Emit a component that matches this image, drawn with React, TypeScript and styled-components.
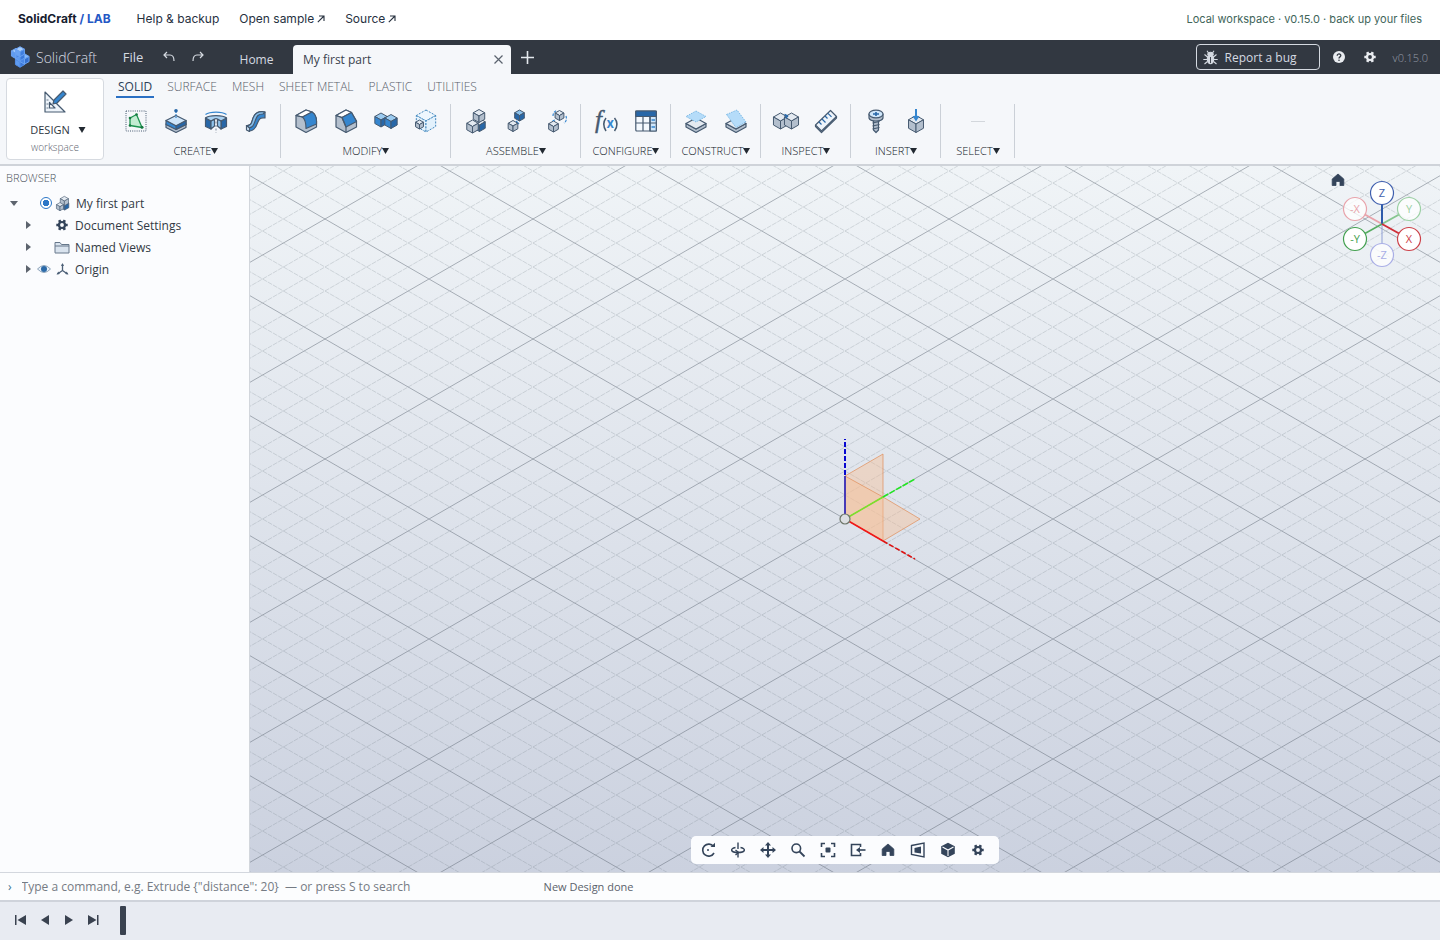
import React from "react";
import styled, { createGlobalStyle } from "styled-components";

const ui = `"Open Sans", "Noto Sans", sans-serif`;
const line = "#465a70";
const blue = "#3586cf";
const deep = "#2767a8";
const pale = "#cfe6fa";
const grey = "#b3bfcd";
const light = "#e4eaf1";

const Global = createGlobalStyle`
  * { box-sizing: border-box; }
  body { margin: 0; font-family: ${ui}; color: #333b47; background: #fafcfe; }
  button, input { font: inherit; color: inherit; }
  button { background: none; border: 0; padding: 0; cursor: pointer; }
  svg { display: block; flex: none; }
`;

const Page = styled.div`
  min-height: 100vh;
  display: flex;
  flex-direction: column;
`;

const SiteBar = styled.header`
  height: 40px;
  flex: none;
  padding: 0 18px 2px;
  display: flex;
  align-items: center;
  gap: 20px;
  background: #fff;
  font-family: Inter, sans-serif;
  font-size: 12px;
  line-height: 36px;
`;
const SiteBrand = styled.strong`
  font-weight: 700;
  color: #16202e;
  margin-right: 6px;
  span { color: #2458c5; }
`;
const SiteLink = styled.a`
  color: #27313f;
  text-decoration: none;
  display: flex;
  align-items: center;
  gap: 3px;
`;
const SiteNote = styled.span`
  margin-left: auto;
  font-size: 11px;
  line-height: 40px;
  color: #41655a;
`;

const AppBar = styled.div`
  height: 34px;
  flex: none;
  display: flex;
  align-items: center;
  padding: 0 12px 0 10px;
  background: #323841;
  color: #d5dae1;
  font-size: 13px;
`;
const Brand = styled.div`
  display: flex;
  align-items: center;
  gap: 6px;
  width: 102px;
  font-size: 14px;
  font-weight: 300;
`;
const BarButton = styled.button<{ $w: number }>`
  width: ${(p) => p.$w}px;
  height: 30px;
  display: flex;
  align-items: center;
  justify-content: center;
`;
const DocTab = styled.div`
  align-self: flex-end;
  width: 218px;
  height: 29px;
  padding: 0 7px 0 10px;
  display: flex;
  align-items: center;
  justify-content: space-between;
  border-radius: 4px 4px 0 0;
  background: #f5f7fa;
  color: #39414d;
  font-size: 12px;
`;
const HomeTab = styled(BarButton)`
  align-self: flex-end;
  margin-left: 9px;
  margin-right: 2px;
  font-size: 12px;
`;
const BarEnd = styled.div`
  margin-left: auto;
  display: flex;
  align-items: center;
`;
const BugButton = styled.button`
  width: 124px;
  height: 26px;
  padding: 0 6px;
  margin-right: 4px;
  display: flex;
  align-items: center;
  gap: 7px;
  border: 1px solid #d5dae1;
  border-radius: 4px;
  font-size: 12px;
`;
const Version = styled.span`
  margin-left: 7px;
  font-size: 11px;
  font-weight: 300;
  color: #959ca7;
`;

const Ribbon = styled.div`
  flex: none;
  display: flex;
  padding: 4px 6px;
  height: 92px;
  background: #f5f7fa;
  border-bottom: 2px solid #cfd3d9;
`;
const Workspace = styled.button`
  width: 98px;
  height: 82px;
  padding-top: 11px;
  display: flex;
  flex-direction: column;
  align-items: center;
  background: #fff;
  border: 1px solid #d6dae0;
  border-radius: 4px;
  font-size: 11px;
  line-height: 16px;
  color: #2e3641;
  small { font-size: 10px; line-height: 18px; font-weight: 300; color: #5e656f; }
`;
const WorkspaceName = styled.span`
  display: flex;
  align-items: center;
  gap: 8px;
  margin-top: 8px;
  padding-left: 6px;
`;
const RibbonMain = styled.div`
  flex: 1;
  padding-left: 7px;
`;
const Tabs = styled.div`
  display: flex;
  gap: 11px;
  padding-left: 5px;
  height: 20px;
`;
const Tab = styled.button<{ $on?: boolean }>`
  height: 20px;
  padding: 0 2px;
  font-size: 12px;
  line-height: 18px;
  font-weight: ${(p) => (p.$on ? 400 : 300)};
  color: ${(p) => (p.$on ? "#2c4058" : "#59606b")};
  border-bottom: 2px solid ${(p) => (p.$on ? "#2a70c4" : "transparent")};
`;
const Groups = styled.div`
  display: flex;
  margin-top: 6px;
`;
const Group = styled.div`
  height: 54px;
  min-width: 74px;
  padding: 0 4px 0 5px;
  display: flex;
  flex-direction: column;
  align-items: center;
  justify-content: space-between;
  border-right: 1px solid #cbd0d7;
`;
const Tools = styled.div`
  display: flex;
  height: 34px;
  align-items: center;
`;
const Tool = styled.button`
  width: 40px;
  height: 34px;
  display: flex;
  align-items: center;
  justify-content: center;
`;
const GroupLabel = styled.button`
  display: flex;
  align-items: center;
  font-size: 11px;
  line-height: 15px;
  font-weight: 300;
  color: #10161e;
`;

const Body = styled.div`
  flex: 1;
  display: flex;
  min-height: 400px;
`;
const Side = styled.aside`
  width: 250px;
  flex: none;
  background: #fbfcfe;
  border-right: 1px solid #d2d6dc;
`;
const SideTitle = styled.h2`
  margin: 0;
  padding: 4px 6px 6px;
  font-size: 11px;
  line-height: 16px;
  font-weight: 300;
  color: #4b525c;
`;
const TreeRow = styled.div<{ $depth: number }>`
  height: 22px;
  padding-left: ${(p) => 7 + p.$depth * 14}px;
  display: flex;
  align-items: center;
  font-size: 12px;
  color: #323a45;
`;
const Twisty = styled.button`
  width: 14px;
  height: 20px;
  display: flex;
  align-items: center;
  justify-content: center;
`;
const Slot = styled.span<{ $w: number }>`
  width: ${(p) => p.$w}px;
  display: flex;
  justify-content: center;
`;
const RowName = styled.span`
  margin-left: 4px;
`;
const Radio = styled.input`
  appearance: none;
  width: 12px;
  height: 12px;
  margin: 0;
  border: 1px solid #2b76c7;
  border-radius: 50%;
  background: radial-gradient(circle, #2b76c7 0 3px, #fff 3px);
`;

const Stage = styled.main`
  flex: 1;
  position: relative;
  overflow: hidden;
  background: linear-gradient(#f0f4f7, #cbd1df);
`;
const Scene = styled.svg`
  position: absolute;
  inset: 0;
  width: 100%;
  height: 100%;
`;
const ViewHome = styled.button`
  position: absolute;
  top: 7px;
  right: 95px;
`;
const Gizmo = styled.svg`
  position: absolute;
  top: 14px;
  right: 18px;
`;
const NavBar = styled.div`
  position: absolute;
  bottom: 8px;
  left: 50%;
  transform: translateX(-50%);
  display: flex;
  padding: 0 6px 0 2px;
  background: #fbfcfe;
  border-radius: 5px;
  button { width: 30px; height: 28px; display: flex; align-items: center; justify-content: center; }
`;

const CommandBar = styled.div`
  height: 30px;
  flex: none;
  display: flex;
  align-items: center;
  padding-left: 8px;
  background: #fcfdfe;
  border-top: 1px solid #d3d7de;
  border-bottom: 2px solid #cfd3db;
  font-size: 12px;
  color: #3d7590;
`;
const CommandInput = styled.input`
  width: 522px;
  margin-left: 10px;
  padding: 0;
  border: 0;
  outline: 0;
  background: none;
  &::placeholder { color: #757b84; opacity: 1; }
`;
const Status = styled.span`
  font-size: 11px;
  color: #5b626c;
`;
const Timeline = styled.div`
  height: 38px;
  flex: none;
  display: flex;
  align-items: center;
  padding: 0 8px 2px;
  background: #e8ebf2;
  button { width: 24px; height: 24px; display: flex; align-items: center; justify-content: center; }
`;
const Marker = styled.span`
  width: 6px;
  height: 29px;
  margin-left: 16px;
  border-radius: 1px;
  background: #3a4250;
`;

const Caret = ({ w = 7 }: { w?: number }) => (
  <svg width={w} height="6" viewBox="0 0 7 6"><path d="M0 0h7L3.500 6z" fill="#222931" /></svg>
);

type CubeProps = { x: number; y: number; r: number; top?: string; left?: string; right?: string; stroke?: string; dash?: string };
const Cube = ({ x, y, r, top = light, left = grey, right = grey, stroke = line, dash }: CubeProps) => {
  const w = r * 0.88;
  const h = r / 2;
  return (
    <g stroke={stroke} strokeWidth="1" strokeLinejoin="round" strokeDasharray={dash}>
      <path d={`M${x} ${y - r}l${w} ${h}l${-w} ${h}l${-w} ${-h}z`} fill={top} />
      <path d={`M${x - w} ${y - h}l${w} ${h}v${r}l${-w} ${-h}z`} fill={left} />
      <path d={`M${x + w} ${y - h}l${-w} ${h}v${r}l${w} ${-h}z`} fill={right} />
    </g>
  );
};

const Icon = ({ children, size = 24 }: { children: React.ReactNode; size?: number }) => (
  <svg width={size} height={size} viewBox="0 0 24 24" fill="none" overflow="visible" stroke={line} strokeWidth="1.200" strokeLinejoin="round">
    {children}
  </svg>
);

const Sketch = () => (
  <Icon>
    <rect x="2" y="2" width="20" height="20" strokeWidth="1" strokeDasharray="1 1.200" />
    <path d="M6 9l6.500-3.500L18 18.500 6 16.500z" fill="#c3ecd2" stroke="#1d9350" strokeWidth="1.300" />
    <g fill="#157a40" stroke="none"><circle cx="6" cy="9" r="1.300" /><circle cx="12.500" cy="5.500" r="1.300" /><circle cx="18" cy="18.300" r="1.500" /><circle cx="6" cy="16.500" r="1.300" /></g>
  </Icon>
);
const Extrude = () => (
  <Icon>
    <path d="M2 15v3.500l10 5 10-5V15l-10 5z" fill={grey} />
    <path d="M2 11.500V15.500l10 5 10-5v-4l-10 5z" fill={blue} />
    <path d="M22 11.500v4l-10 5v-4z" fill={deep} />
    <path d="M12 6.500l10 5-10 5.200-10-5.200z" fill={pale} />
    <path d="M12 9V3" stroke={blue} strokeDasharray="1.500 1" /><circle cx="12" cy="1.800" r="1.800" fill={deep} stroke="none" />
  </Icon>
);
const Revolve = () => (
  <Icon>
    <path d="M1.500 5.500C6 2.200 18 2.200 22.500 5.500" stroke={blue} />
    <path d="M1.500 9v8.500l5.500 2.500v-8zM22.500 9v8.500l-5.500 2.500v-8z" fill={deep} />
    <path d="M7 12l3.500-2v7L7 20zM17 12l-3.500-2v7l3.500 3z" fill="#8fc3ec" />
    <path d="M1.500 9C5 5.800 19 5.800 22.500 9L17 12l-3.500-2c-1-.4-2-.4-3 0L7 12z" fill="#a9d2f3" />
    <path d="M12 12.500v11" stroke="#8e9aa8" strokeDasharray="2 1.500" />
  </Icon>
);
const Sweep = () => (
  <Icon>
    <path d="M2.500 16.500c6 .5 5-4.500 7-8.500 2-4.500 6-6 11.500-5v6c-5-.8-6 1-7.500 5-1.500 4.500-4 8-8.500 8z" fill={blue} />
    <path d="M2.500 16.500c6 .5 5-4.500 7-8.500 2-4.500 6-6 11.500-5l-2 2c-5 0-6 2-7.500 6-1.500 4-2.500 8-6.500 7.500z" fill="#86bfec" />
    <path d="M2.500 16.500l3 2.500v3.500l-3-1.500z" fill={pale} />
  </Icon>
);
const Fillet = () => (
  <Icon>
    <path d="M2 6.500L12 1l6 2c3 2 4.500 5 4.500 9v6L12 23.500 2 18z" fill={grey} />
    <path d="M2 6.500L12 1l6 2-9.500 5z" fill="#fff" />
    <path d="M8.500 8L18 3c3 2 4.500 5 4.500 9v3L12 19.500c0-6-.5-9-3.500-11.500z" fill={blue} />
    <path d="M2 6.500l6.500 1.500" />
  </Icon>
);
const Chamfer = () => (
  <Icon>
    <path d="M2 6.500L12 1l5.500 2.500 5 8.500v6L12 23.500 2 18z" fill={grey} />
    <path d="M2 6.500L12 1l5.500 2.500-9.500 5z" fill="#fff" />
    <path d="M8 8.500l9.500-5 5 9L12 18z" fill={blue} />
    <path d="M2 6.500l6 2 4 9.500v5.500" />
  </Icon>
);
const Combine = () => (
  <Icon>
    <Cube x={7} y={11} r={7} top="#9bcbf0" left={blue} right={deep} />
    <Cube x={17} y={12.500} r={7} top="#9bcbf0" left={blue} right={deep} />
  </Icon>
);
const Shell = () => (
  <Icon>
    <Cube x={12} y={12} r={11} top="#eef7fe" left="#e2f1fc" right="#e2f1fc" stroke="#3f86bd" dash="2 1.300" />
    <Cube x={5.500} y={15.500} r={4.500} />
  </Icon>
);
const NewComponent = () => (
  <Icon>
    <Cube x={15.500} y={16} r={6.500} left={deep} right={deep} />
    <Cube x={15} y={7} r={6.500} />
    <Cube x={8.500} y={17.500} r={6.500} />
  </Icon>
);
const Joint = () => (
  <Icon>
    <Cube x={15.500} y={6.500} r={5.500} top="#8cc3ee" left={deep} right={deep} />
    <path d="M12 12l3 3" stroke={blue} />
    <Cube x={9} y={17} r={5.500} />
  </Icon>
);
const AsBuilt = () => (
  <Icon>
    <Cube x={15.500} y={6.500} r={5} /><Cube x={9.500} y={17.500} r={5.500} />
    <path d="M9 7c0-3 2-5 4-6M22 7c1 3 0 6-2 7M11 11l-3 1" stroke={blue} strokeDasharray="2.500 1.200" />
  </Icon>
);
const Params = () => (
  <Icon>
    <g stroke="none" fontFamily="Liberation Serif, serif" fontStyle="italic">
      <text x="1" y="19" fontSize="25" fill={line} stroke={line} strokeWidth="0.400">f</text>
      <text x="12.500" y="18.500" fontSize="13" fontWeight="700" fontFamily="Inter, sans-serif" fontStyle="normal" fill={blue}>x</text>
    </g>
    <path d="M12 9q-4.500 6 0 13M20.500 9q5 6 0 13" strokeWidth="1.500" />
  </Icon>
);
const Table = () => (
  <Icon>
    <rect x="1.800" y="2" width="20.500" height="20" rx="1" fill="#f4f9fe" />
    <path d="M1.800 2h20.500v5.500H1.800z" fill={deep} />
    <path d="M16 7.500h6.300V22H16z" fill={pale} />
    <path d="M1.800 14h20.500M9 7.500V22M16 7.500V22" />
    <path d="M17.500 11h3.500M17.500 18h3.500" stroke={blue} strokeWidth="1.500" />
  </Icon>
);
const Slab = () => (
  <><path d="M2 14.500v3.500l10 5.500 10-5.500v-3.500l-10 5.500z" fill={grey} /><path d="M12 9l10 5.500L12 20 2 14.500z" fill={light} /></>
);
const OffsetPlane = () => (
  <Icon><Slab /><path d="M12 2l10 5.500L12 13 2 7.500z" fill="#b5dcf9" stroke="#6aaee0" strokeWidth="0.800" strokeDasharray="1.500 1" /></Icon>
);
const AnglePlane = () => (
  <Icon><Slab /><path d="M2.500 5.500L13 1l9 12-10 5.500z" fill="#b5dcf9" stroke="#6aaee0" strokeWidth="0.800" strokeDasharray="1.500 1" /></Icon>
);
const Interference = () => (
  <Icon>
    <Cube x={6.500} y={12} r={8} /><Cube x={17.500} y={12} r={8} />
    <path d="M10.500 5.500l3 1.500-2 2" stroke={deep} strokeWidth="1.800" />
  </Icon>
);
const Measure = () => (
  <Icon>
    <path d="M1.500 16L16.500 1.500l6 6L7.500 22z" fill="#eef4fa" />
    <path d="M1.500 16v1.500l6 6 15-14.500V7.500" />
    <path d="M5 13l2.500 2.500M8 10l3.500 3.500M11 7l2.500 2.500M14 4.300l3.500 3.500" stroke={deep} />
  </Icon>
);
const Screw = () => (
  <Icon>
    <path d="M9.500 10v11l2.500 2.500 2.500-2.500V10z" fill={grey} />
    <path d="M8.500 14l7-1.500M8.500 17l7-1.500M8.500 20l7-1.500" />
    <path d="M5 5v4c1 4 13 4 14 0V5z" fill={grey} />
    <ellipse cx="12" cy="5" rx="7" ry="3.800" fill={pale} />
    <path d="M12 3v4M9 5h6" stroke={deep} strokeWidth="1.600" />
  </Icon>
);
const InsertMesh = () => (
  <Icon>
    <Cube x={12} y={15} r={8.500} />
    <path d="M12 0v9" stroke={blue} strokeWidth="2" /><path d="M8.500 7h7L12 12.500z" fill={blue} stroke="none" />
  </Icon>
);
const NoTool = () => <Icon><path d="M5 12.500h14" stroke="#d3d7dc" strokeWidth="1" /></Icon>;

const groups: [string, [string, () => React.ReactElement][]][] = [
  ["CREATE", [["Sketch", Sketch], ["Extrude", Extrude], ["Revolve", Revolve], ["Sweep", Sweep]]],
  ["MODIFY", [["Fillet", Fillet], ["Chamfer", Chamfer], ["Combine", Combine], ["Shell", Shell]]],
  ["ASSEMBLE", [["New component", NewComponent], ["Joint", Joint], ["As-built joint", AsBuilt]]],
  ["CONFIGURE", [["Parameters", Params], ["Table", Table]]],
  ["CONSTRUCT", [["Offset plane", OffsetPlane], ["Plane at angle", AnglePlane]]],
  ["INSPECT", [["Interference", Interference], ["Measure", Measure]]],
  ["INSERT", [["Fastener", Screw], ["Insert mesh", InsertMesh]]],
  ["SELECT", [["Select", NoTool]]],
];

const Gear = ({ size = 12, color = "#34445a" }: { size?: number; color?: string }) => (
  <svg width={size} height={size} viewBox="0 0 12 12" fill="none" stroke={color}>
    <circle cx="6" cy="6" r="3" strokeWidth="2.200" />
    <path d="M.3 6h2.500M9.200 6h2.500M3.150 1.060l1.250 2.170M7.600 8.770l1.250 2.170M8.850 1.060L7.600 3.230M4.400 8.770l-1.250 2.170" strokeWidth="2.600" />
  </svg>
);
const House = () => (
  <svg width="14" height="14" viewBox="0 0 14 14"><path d="M7 1L12.800 6v6.500H9V8.500H5v4H1.200V6z" fill="#34445a" stroke="#34445a" strokeWidth=".8" strokeLinejoin="round" /></svg>
);
const Arrow = () => (
  <svg width="8" height="8" viewBox="0 0 8 8" fill="none" stroke="#27313f" strokeWidth="1.100"><path d="M.8 7.200L7 1M2 1h5v5" /></svg>
);
const Bug = () => (
  <svg width="15" height="15" viewBox="0 0 15 15" stroke="#d5dae1" fill="#d5dae1" strokeWidth="1.100">
    <ellipse cx="7.500" cy="9" rx="3.200" ry="4.700" /><path d="M4.800 4.500a2.700 2.200 0 0 1 5.400 0z" />
    <path d="M5.500 3L4 .8M9.500 3L11 .8M4.500 7L1.500 4.500M10.500 7l3-2.500M4.500 9.500H.3M10.500 9.500h4.200M4.500 11.500L1.500 14M10.500 11.500l3 2.500" fill="none" />
    <path d="M7.500 7v6" stroke="#323841" strokeWidth=".9" />
  </svg>
);
const Logo = () => (
  <svg width="20" height="22" viewBox="0 0 20 22">
    <Cube x={10} y={16} r={5.200} top="#8bbcf8" left="#5f9cf2" right="#3b79da" stroke="#5590ea" />
    <Cube x={14.500} y={13} r={5.200} top="#8bbcf8" left="#4a88e8" right="#3470d0" stroke="#6ba2f2" />
    <Cube x={10} y={9.500} r={5.200} top="#8bbcf8" left="#5f9cf2" right="#3b79da" stroke="#5f9bf0" />
    <Cube x={6} y={7.500} r={5.200} top="#9cc7fb" left="#5f9cf2" right="#4a88e8" stroke="#6ba2f2" />
    <Cube x={10} y={5.700} r={5} top="#a9cffc" left="#6aa4f4" right="#3f7fe0" stroke="#6ba2f2" />
  </svg>
);

const n = "#34445a";
const navIcons: [string, React.ReactNode][] = [
  ["Orbit", <g><path d="M13.500 4.500A6 6 0 1 0 14 11" /><path d="M10.500 5h4.500V.8z" fill={n} stroke="none" /><circle cx="8" cy="8" r="1" fill={n} stroke="none" /></g>],
  ["Turntable", <g strokeWidth="1.400"><path d="M8 .5V7M8 9.500v6M5.500 5.500C-.5 6.500.5 10.500 8 10.500S16.500 6.500 10.500 5.500" /><path d="M5.500 8l3 2.500-3 2.500" /></g>],
  ["Pan", <g strokeWidth="2"><path d="M8 3v10M3 8h10" /><path d="M8 0l3 3.500H5zM8 16l3-3.500H5zM0 8l3.500-3v6zM16 8l-3.500-3v6z" fill={n} stroke="none" /></g>],
  ["Zoom", <g><circle cx="6.300" cy="6.300" r="4.300" /><path d="M9.500 9.500l5 5" strokeWidth="1.800" /></g>],
  ["Fit", <g><path d="M1.500 5V1.500H5M11 1.500h3.500V5M14.500 11v3.500H11M5 14.500H1.500V11" /><rect x="5.500" y="5.500" width="5" height="5" rx="1" fill={n} stroke="none" /></g>],
  ["Look at", <g><path d="M10.500 5V2.500H1.500v11h9V11" /><path d="M15.500 8H8" /><path d="M6 8l4-3v6z" fill={n} stroke="none" /></g>],
  ["Home view", null],
  ["Perspective", <g strokeWidth="1.400"><path d="M1.500 3.500l12.500-2.500v14L1.500 12.500z" /><path d="M4.500 6l6.500-1.500v7L4.500 10.500z" fill={n} stroke="none" /></g>],
  ["Visual style", <g><path d="M8 .8l6.800 3.500v7.500L8 15.300 1.200 11.800V4.300z" fill={n} stroke="none" /><path d="M2.500 5L8 8l5.500-3M8 8v6" stroke="#fbfcfe" strokeWidth="1.100" /></g>],
  ["Display settings", undefined],
];

const axes: [string, number, number, string, boolean][] = [
  ["-X", 13, 29, "#e8a3ab", true], ["Y", 67, 29, "#9bd0a3", true], ["-Z", 40, 75, "#a9aee6", true],
  ["Z", 40, 13, "#3f5fae", false], ["-Y", 13, 59, "#43a050", false], ["X", 67, 59, "#cc4048", false],
];

const minorLines = [-4, -3, -2, -1, 1, 2, 3, 4, 6, 7, 8, 9]
  .map((k) => (k < 5 ? `M0 ${k * 24}l208 120` : "") + (k > 0 ? `M0 ${k * 24}l208 -120` : ""))
  .join("");

const App = () => (
  <Page>
    <Global />
    <SiteBar>
      <SiteBrand>SolidCraft <span>/ LAB</span></SiteBrand>
      <SiteLink href="#help">Help &amp; backup</SiteLink>
      <SiteLink href="#sample">Open sample <Arrow /></SiteLink>
      <SiteLink href="#source">Source <Arrow /></SiteLink>
      <SiteNote>Local workspace · v0.15.0 · back up your files</SiteNote>
    </SiteBar>

    <AppBar>
      <Brand><Logo />SolidCraft</Brand>
      <BarButton $w={42}>File</BarButton>
      <BarButton $w={29} aria-label="Undo">
        <svg width="12" height="12" viewBox="0 0 12 12" fill="none" stroke="#d5dae1" strokeWidth="1.200"><path d="M4 1L1 4l3 3M1 4h6q4 0 4 6" /></svg>
      </BarButton>
      <BarButton $w={30} aria-label="Redo">
        <svg width="12" height="12" viewBox="0 0 12 12" fill="none" stroke="#d5dae1" strokeWidth="1.200"><path d="M8 1l3 3-3 3M11 4H5Q1 4 1 10" /></svg>
      </BarButton>
      <HomeTab $w={69}>Home</HomeTab>
      <DocTab>
        My first part
        <button aria-label="Close tab"><svg width="11" height="11" viewBox="0 0 11 11" stroke="#5b636e" strokeWidth="1.200"><path d="M1.500 1.500l8 8M9.500 1.500l-8 8" /></svg></button>
      </DocTab>
      <BarButton $w={32} aria-label="New tab">
        <svg width="13" height="13" viewBox="0 0 13 13" stroke="#e4e8ed" strokeWidth="1.600"><path d="M6.500 0v13M0 6.500h13" /></svg>
      </BarButton>
      <BarEnd>
        <BugButton><Bug />Report a bug</BugButton>
        <BarButton $w={31} aria-label="Help">
          <svg width="12" height="12" viewBox="0 0 12 12"><circle cx="6" cy="6" r="6" fill="#e9ecf0" /><path d="M4.200 4.800c0-2.600 3.800-2.400 3.600 0C7.700 6 6 5.800 6 7.400" fill="none" stroke="#323841" strokeWidth="1.300" /><circle cx="6" cy="9.300" r=".8" fill="#323841" /></svg>
        </BarButton>
        <BarButton $w={31} aria-label="Settings"><Gear color="#e9ecf0" size={12} /></BarButton>
        <Version>v0.15.0</Version>
      </BarEnd>
    </AppBar>

    <Ribbon>
      <Workspace>
        <Icon>
          <path d="M2 2l20 20H2zM6.500 12.500V18H12z" fill="#eef4fa" fillRule="evenodd" />
          <path d="M10 14l1-4 9-9 3 3-9 9z" fill={blue} /><path d="M3.500 10h2M3.500 14h2M3.500 18h2" strokeWidth=".8" />
        </Icon>
        <WorkspaceName>DESIGN <Caret w={8} /></WorkspaceName>
        <small>workspace</small>
      </Workspace>
      <RibbonMain>
        <Tabs>
          {["SOLID", "SURFACE", "MESH", "SHEET METAL", "PLASTIC", "UTILITIES"].map((t, i) => <Tab key={t} $on={i === 0}>{t}</Tab>)}
        </Tabs>
        <Groups>
          {groups.map(([name, tools]) => (
            <Group key={name}>
              <Tools>{tools.map(([label, Glyph]) => <Tool key={label} aria-label={label}><Glyph /></Tool>)}</Tools>
              <GroupLabel>{name}<Caret /></GroupLabel>
            </Group>
          ))}
        </Groups>
      </RibbonMain>
    </Ribbon>

    <Body>
      <Side>
        <SideTitle>BROWSER</SideTitle>
        <TreeRow $depth={0}>
          <Twisty aria-label="Collapse"><svg width="8" height="5" viewBox="0 0 8 5"><path d="M0 0h8L4 5z" fill="#5d646e" /></svg></Twisty>
          <Slot $w={18} />
          <Slot $w={14}><Radio type="radio" defaultChecked aria-label="Activate My first part" /></Slot>
          <Slot $w={19}>
            <Icon size={15}><Cube x={15.500} y={15} r={7.500} left={deep} right={deep} /><Cube x={15} y={8} r={7.500} /><Cube x={8} y={17} r={6.500} /></Icon>
          </Slot>
          <RowName>My first part</RowName>
        </TreeRow>
        {["Document Settings", "Named Views", "Origin"].map((name, i) => (
          <TreeRow key={name} $depth={1}>
            <Twisty aria-label="Expand"><svg width="5" height="8" viewBox="0 0 5 8"><path d="M0 0v8l5-4z" fill="#5d646e" /></svg></Twisty>
            <Slot $w={18}>
              {i === 2 && <svg width="14" height="10" viewBox="0 0 14 10"><path d="M.5 5Q7-2 13.500 5 7 12 .5 5z" fill="#e6f0f9" stroke="#8da3b9" /><circle cx="7" cy="5" r="3" fill="#2c6aa8" /></svg>}
            </Slot>
            <Slot $w={18}>
              {i === 0 && <Gear />}
              {i === 1 && <svg width="16" height="13" viewBox="0 0 16 13"><path d="M1 11.500V1.500h5l1.500 2H15v8.500H1z" fill="#d9e3ee" stroke="#66778a" /><path d="M1 5h14" stroke="#66778a" /></svg>}
              {i === 2 && <svg width="13" height="12" viewBox="0 0 13 12" fill="none" stroke="#4b5f76" strokeWidth="1.300"><path d="M6.500 1v6.500L1.500 11M6.500 7.500l5 3.500" /><path d="M6.500 0l1.500 3h-3zM.5 11.500l3.300-.5-1.500-2.500zM12.500 11.500l-3.300-.5 1.500-2.500z" fill="#4b5f76" stroke="none" /></svg>}
            </Slot>
            <RowName>{name}</RowName>
          </TreeRow>
        ))}
      </Side>

      <Stage>
        <Scene aria-label="Model view">
          <defs>
            <pattern id="grid" width="208" height="120" patternUnits="userSpaceOnUse">
              <path d={minorLines} stroke="#69737f" strokeOpacity=".26" strokeWidth=".9" strokeDasharray="5 1" />
              <path d="M0 0l208 120M0 120L208 0" fill="none" stroke="#606975" strokeOpacity=".56" strokeWidth=".9" />
            </pattern>
          </defs>
          <svg x="50%" y="50%" width="1" height="1" overflow="visible">
            <rect x="-2080" y="-1200" width="4160" height="2400" fill="url(#grid)" />
            <g fill="#f9bf93" fillOpacity=".42" stroke="#e08d58" strokeOpacity=".7">
              <path d="M0 0V-43L38-65V-22z" /><path d="M0 0L38 22V-22L0-43z" /><path d="M0 0L38-22 75 0 38 22z" />
            </g>
            <path d="M0 0V-43" stroke="#1414c4" strokeWidth="1.500" /><path d="M0-44V-80" stroke="#0808d0" strokeWidth="2" strokeDasharray="5 2" />
            <path d="M0 0L38-22" stroke="#7be02c" strokeWidth="1.600" /><path d="M38-22L70-40" stroke="#22e622" strokeWidth="1.600" strokeDasharray="6 1.500" />
            <path d="M0 0L38 22" stroke="#f01818" strokeWidth="1.600" /><path d="M38 22L70 40" stroke="#e01414" strokeWidth="1.600" strokeDasharray="5 2" />
            <circle r="5" fill="#dcdfe2" stroke="#6c7568" strokeWidth="1.200" />
          </svg>
        </Scene>
        <ViewHome aria-label="Home view"><House /></ViewHome>
        <Gizmo width="80" height="88" viewBox="0 0 80 88" fill="none">
          <path d="M40 44L22 34" stroke="#e8a3ab" strokeWidth="2" /><path d="M40 44l18-10" stroke="#86c68f" strokeWidth="2" />
          <path d="M40 44v20" stroke="#8f9fd4" /><path d="M40 44V24" stroke="#2f5bab" strokeWidth="2" />
          <path d="M40 44L22 54" stroke="#57ad62" strokeWidth="1.500" /><path d="M40 44l18 10" stroke="#cf2f38" strokeWidth="2" />
          {axes.map(([name, x, y, c, soft]) => (
            <g key={name}>
              <circle cx={x} cy={y} r="11.500" fill="#fff" fillOpacity={soft ? 0.75 : 1} stroke={c} strokeWidth="1.200" />
              <text x={x} y={y + 4} textAnchor="middle" fontSize="11" fill={c}>{name}</text>
            </g>
          ))}
        </Gizmo>
        <NavBar>
          {navIcons.map(([name, art]) => (
            <button key={name} aria-label={name}>
              {art === null ? <House /> : art === undefined ? <Gear /> : <svg width="16" height="16" viewBox="0 0 16 16" fill="none" stroke={n} strokeWidth="1.600">{art}</svg>}
            </button>
          ))}
        </NavBar>
      </Stage>
    </Body>

    <CommandBar>
      ›<CommandInput aria-label="Command" placeholder={'Type a command, e.g. Extrude {"distance": 20}  — or press S to search'} />
      <Status>New Design done</Status>
    </CommandBar>
    <Timeline>
      {[
        ["To start", "M1 1h1.500v10H1zM12 1v10L3.500 6z"],
        ["Step back", "M11 1v10L3 6z"],
        ["Play", "M3 1v10l8-5z"],
        ["To end", "M11 1h1.500v10H11zM2 1v10l8.500-5z"],
      ].map(([name, d]) => (
        <button key={name} aria-label={name}><svg width="13" height="12" viewBox="0 0 13 12"><path d={d} fill="#3a4250" /></svg></button>
      ))}
      <Marker />
    </Timeline>
  </Page>
);

export default App;
